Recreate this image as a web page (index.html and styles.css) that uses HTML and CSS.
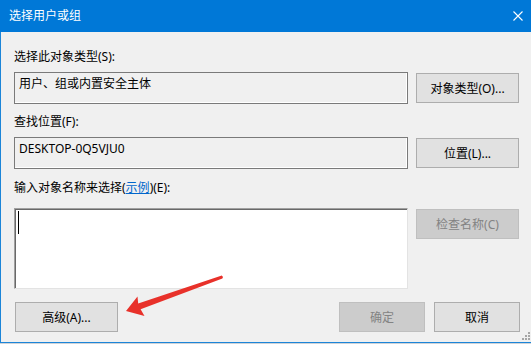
FILE: index.html
```html
<!DOCTYPE html>
<html lang="zh-CN">
<head>
    <meta charset="UTF-8">
    <title>选择用户或组</title>
    <link rel="stylesheet" href="styles.css">
</head>
<body>
    <div class="dialog">
        <div class="titlebar">
            <span class="title">选择用户或组</span>
            <svg class="close" width="10" height="10" viewBox="0 0 10 10">
                <path d="M0.5 0.5 L9.5 9.5 M9.5 0.5 L0.5 9.5" stroke="#fff" stroke-width="1.1" fill="none"/>
            </svg>
        </div>
        <div class="content">
            <div class="label">选择此对象类型(S):</div>
            <div class="row">
                <div class="field">用户、组或内置安全主体</div>
                <div class="button side">对象类型(O)...</div>
            </div>

            <div class="label second">查找位置(F):</div>
            <div class="row">
                <div class="field">DESKTOP-0Q5VJU0</div>
                <div class="button side">位置(L)...</div>
            </div>

            <div class="label third">输入对象名称来选择(<span class="link">示例</span>)(E):</div>
            <div class="row">
                <div class="names"><span class="caret"></span></div>
                <div class="button side disabled">检查名称(C)</div>
            </div>

            <div class="footer">
                <div class="button side">高级(A)...</div>
                <div class="spacer"></div>
                <div class="button small disabled">确定</div>
                <div class="button small">取消</div>
            </div>
        </div>

        <svg class="grip" width="10" height="10" viewBox="0 0 10 10">
            <rect x="7" y="1" width="2" height="2" fill="#a6a6a6"/>
            <rect x="4" y="4" width="2" height="2" fill="#a6a6a6"/>
            <rect x="7" y="4" width="2" height="2" fill="#a6a6a6"/>
            <rect x="1" y="7" width="2" height="2" fill="#a6a6a6"/>
            <rect x="4" y="7" width="2" height="2" fill="#a6a6a6"/>
            <rect x="7" y="7" width="2" height="2" fill="#a6a6a6"/>
        </svg>

        <!-- red annotation arrow pointing at the advanced button -->
        <svg class="arrow" width="531" height="344" viewBox="0 0 531 344">
            <polygon fill="#e8312a" points="126,311 137.5,296.5 138.2,303.6 221.8,275.6 223,277 222.4,278.4 140.6,309.3 144.5,316"/>
        </svg>
    </div>
</body>
</html>
```

FILE: styles.css
```css
html, body {
    margin: 0;
    padding: 0;
}

body {
    width: 531px;
    height: 344px;
    overflow: hidden;
    background-color: #cfd3d8;
    font-family: "Noto Sans", "Noto Sans CJK SC", sans-serif;
    font-size: 12px;
    color: #000;
}

.dialog {
    position: relative;
    width: 530px;
    height: 342px;
    background-color: #F0F0F0;
    border-left: 1px solid #1c85d8;
    border-bottom: 1px solid #1c85d8;
}

.titlebar {
    height: 32px;
    background-color: #0078D7;
    display: flex;
    align-items: center;
    justify-content: space-between;
    padding: 0 8px 0 9px;
    margin-left: -1px;
    color: #fff;
}

.title {
    line-height: 16px;
    padding-bottom: 1px;
}

.close {
    display: block;
}

.content {
    padding: 17px 11px 0 13px;
}

.label {
    line-height: 16px;
    height: 16px;
    margin-bottom: 7px;
    white-space: nowrap;
}

.label.second {
    margin-top: 10px;
}

.label.third {
    margin-top: 11px;
    margin-bottom: 12px;
}

.link {
    color: #0066CC;
    text-decoration: underline;
}

.row {
    display: flex;
    gap: 8px;
    align-items: flex-start;
}

.field {
    box-sizing: border-box;
    width: 394px;
    height: 32px;
    padding: 3px 4px;
    line-height: 16px;
    border: 1px solid #7a7a7a;
    box-shadow: inset -1px -1px 0 #ffffff;
    background-color: #F0F0F0;
    white-space: nowrap;
}

.button {
    box-sizing: border-box;
    height: 30px;
    display: flex;
    align-items: center;
    justify-content: center;
    background-color: #E1E1E1;
    border: 1px solid #ADADAD;
    white-space: nowrap;
}

.row .button {
    margin-top: 1px;
}

.button.side {
    width: 103px;
}

.button.small {
    width: 86px;
}

.button.disabled {
    background-color: #CCCCCC;
    border-color: #BFBFBF;
    color: #838383;
}

.names {
    box-sizing: border-box;
    width: 394px;
    height: 81px;
    background-color: #fff;
    border-top: 1px solid #a0a0a0;
    border-left: 1px solid #a0a0a0;
    border-right: 1px solid #e3e3e3;
    border-bottom: 1px solid #e3e3e3;
    box-shadow: inset 1px 1px 0 #696969;
    padding: 2px 0 0 3px;
}

.caret {
    display: block;
    width: 1px;
    height: 23px;
    background-color: #000;
}

.footer {
    display: flex;
    gap: 9px;
    margin-top: 13px;
    padding-left: 1px;
}

.spacer {
    flex: 1;
}

.grip {
    position: absolute;
    right: 0;
    bottom: 1px;
}

.arrow {
    position: absolute;
    left: -1px;
    top: 0;
    pointer-events: none;
}
```
